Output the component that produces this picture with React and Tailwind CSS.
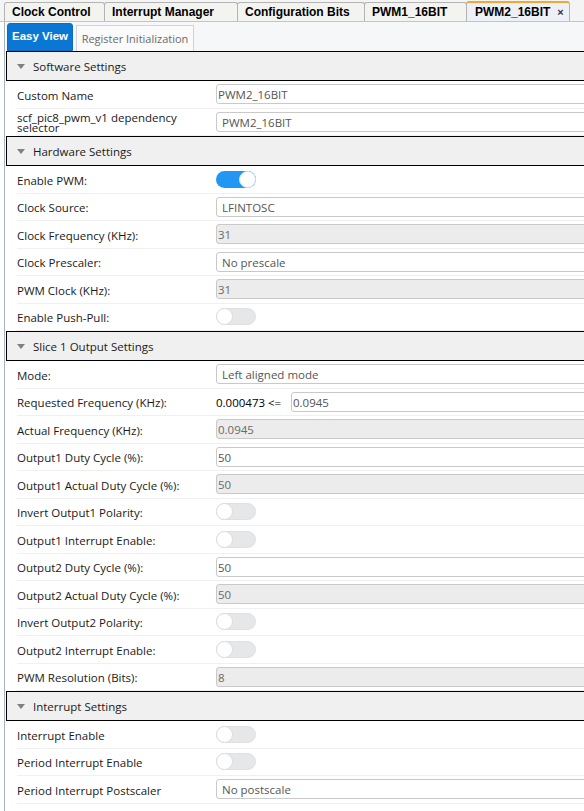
import React from "react";

const F = { fontFamily: '"Open Sans", "Noto Sans", sans-serif' };
const T = { fontFamily: '"Liberation Sans", Arial, sans-serif' };

function Toggle({ on }) {
  return on ? (
    <div className="relative w-[40px] h-[17px] rounded-full bg-[#2196f3]">
      <div className="absolute right-0 top-0 w-[17px] h-[17px] rounded-full bg-white border border-[#d6e4f0]" />
    </div>
  ) : (
    <div className="relative w-[40px] h-[17px] rounded-full bg-[#e6e7e9] border border-[#e0e0e0]">
      <div className="absolute left-[-1px] top-[-1px] w-[17px] h-[17px] rounded-full bg-white border border-[#dcdcdc]" />
    </div>
  );
}

function Field({ value, kind }) {
  const base =
    "h-[20px] w-[400px] rounded-[3px] border border-[#c9c9c9] flex items-center pt-[1px] text-[11.5px] ";
  if (kind === "ro")
    return <div className={base + "bg-[#ececec] pl-[1px] text-[#6a6a6a]"}>{value}</div>;
  if (kind === "combo")
    return <div className={base + "bg-white pl-[5px] text-[#555]"}>{value}</div>;
  return <div className={base + "bg-white pl-[1px] text-[#555]"}>{value}</div>;
}

function Row({ label, children, twoLine }) {
  return (
    <div className="ml-[11px] h-[27.5px] border-b border-[#f0f0f0] flex items-center">
      <div className="w-[199px] shrink-0 text-[11.5px] text-[#1a1a1a] pt-[2px]">
        {twoLine ? (
          <div className="leading-[10px]">
            scf_pic8_pwm_v1 dependency
            <br />
            selector
          </div>
        ) : (
          label
        )}
      </div>
      <div className="flex items-center">{children}</div>
    </div>
  );
}

function Header({ title }) {
  return (
    <div className="h-[30px] border border-black bg-[#f0f0f0] flex items-center mr-[-10px]">
      <svg width="8" height="5" viewBox="0 0 8 5" className="ml-[10px] mr-[8px]">
        <polygon points="0,0 8,0 4,5" fill="#808080" />
      </svg>
      <span className="text-[11.5px] text-[#1a1a1a] pt-[1px]">{title}</span>
    </div>
  );
}

const tabs = [
  { t: "Clock Control", w: 101 },
  { t: "Interrupt Manager", w: 134 },
  { t: "Configuration Bits", w: 128 },
  { t: "PWM1_16BIT", w: 103 },
];

export default function App() {
  return (
    <div className="w-[584px] h-[811px] overflow-hidden bg-white" style={F}>
      {/* top tab strip */}
      <div className="h-[22px] bg-[#f4f4f4] border-b border-[#c4c4c4] flex items-end pl-[4px]">
        {tabs.map((x) => (
          <div
            key={x.t}
            style={{ width: x.w, ...T }}
            className="h-[19px] border border-b-0 border-[#b4b4b4] rounded-t-[3px] bg-[#f3f3ef] flex items-center pl-[7px] text-[12px] font-bold text-black -mr-px whitespace-nowrap"
          >
            {x.t}
          </div>
        ))}
        <div
          style={T}
          className="w-[104px] h-[20px] border border-b-0 border-[#b4b4b4] border-t-2 border-t-[#f4a731] rounded-t-[3px] bg-[#eef0f8] flex items-center pl-[8px] text-[12px] font-bold text-black whitespace-nowrap"
        >
          PWM2_16BIT
          <span className="ml-[7px] text-[11px] text-[#333]">×</span>
        </div>
      </div>

      <div className="ml-[4px] border-l border-[#a9b2c2] h-full pl-[1px]">
        {/* sub tabs */}
        <div className="h-[29px] bg-[#f6f7f9] flex items-end pl-[1px] gap-[3px] mr-[-10px]">
          <div
            style={T}
            className="h-[28px] w-[66px] bg-[#0a77d5] rounded-t-[3px] flex items-center justify-center text-white font-bold text-[11.5px] border border-[#0a6cc2] whitespace-nowrap"
          >
            Easy View
          </div>
          <div className="h-[26px] w-[118px] bg-[#fafafa] border border-b-0 border-[#d4d4d4] flex items-center justify-center text-[11px] text-[#6a6a6a] whitespace-nowrap pt-[1px]">
            Register Initialization
          </div>
        </div>

        <Header title="Software Settings" />
        <Row label="Custom Name">
          <Field value="PWM2_16BIT" />
        </Row>
        <Row twoLine>
          <Field value="PWM2_16BIT" kind="combo" />
        </Row>

        <Header title="Hardware Settings" />
        <Row label="Enable PWM:">
          <Toggle on />
        </Row>
        <Row label="Clock Source:">
          <Field value="LFINTOSC" kind="combo" />
        </Row>
        <Row label="Clock Frequency (KHz):">
          <Field value="31" kind="ro" />
        </Row>
        <Row label="Clock Prescaler:">
          <Field value="No prescale" kind="combo" />
        </Row>
        <Row label="PWM Clock (KHz):">
          <Field value="31" kind="ro" />
        </Row>
        <Row label="Enable Push-Pull:">
          <Toggle />
        </Row>

        <Header title="Slice 1 Output Settings" />
        <Row label="Mode:">
          <Field value="Left aligned mode" kind="combo" />
        </Row>
        <Row label="Requested Frequency (KHz):">
          <span className="text-[11.5px] text-black w-[75px] shrink-0 pt-[2px]">0.000473 &lt;=</span>
          <Field value="0.0945" />
        </Row>
        <Row label="Actual Frequency (KHz):">
          <Field value="0.0945" kind="ro" />
        </Row>
        <Row label="Output1 Duty Cycle (%):">
          <Field value="50" />
        </Row>
        <Row label="Output1 Actual Duty Cycle (%):">
          <Field value="50" kind="ro" />
        </Row>
        <Row label="Invert Output1 Polarity:">
          <Toggle />
        </Row>
        <Row label="Output1 Interrupt Enable:">
          <Toggle />
        </Row>
        <Row label="Output2 Duty Cycle (%):">
          <Field value="50" />
        </Row>
        <Row label="Output2 Actual Duty Cycle (%):">
          <Field value="50" kind="ro" />
        </Row>
        <Row label="Invert Output2 Polarity:">
          <Toggle />
        </Row>
        <Row label="Output2 Interrupt Enable:">
          <Toggle />
        </Row>
        <Row label="PWM Resolution (Bits):">
          <Field value="8" kind="ro" />
        </Row>

        <Header title="Interrupt Settings" />
        <Row label="Interrupt Enable">
          <Toggle />
        </Row>
        <Row label="Period Interrupt Enable">
          <Toggle />
        </Row>
        <Row label="Period Interrupt Postscaler">
          <Field value="No postscale" kind="combo" />
        </Row>
      </div>
    </div>
  );
}
